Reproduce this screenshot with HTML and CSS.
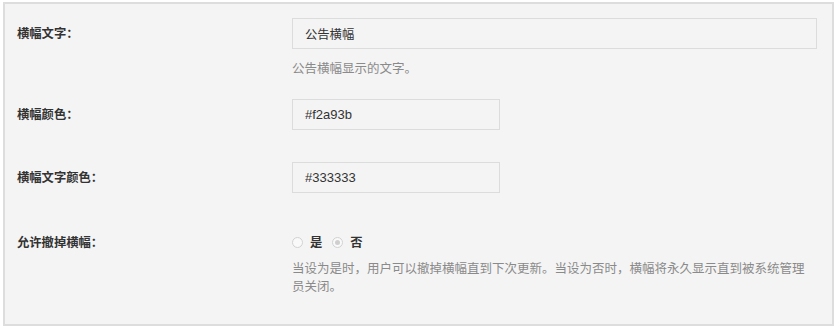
FILE: index.html
```html
<!DOCTYPE html>
<html lang="zh-CN">
<head>
<meta charset="utf-8">
<title>横幅设置</title>
<link rel="stylesheet" href="styles.css">
</head>
<body>
<div class="panel">
  <div class="row row-first">
    <div class="label">横幅文字：</div>
    <div class="field">
      <input class="input input-wide" type="text" value="公告横幅">
      <p class="desc desc-short">公告横幅显示的文字。</p>
    </div>
  </div>
  <div class="row row-second">
    <div class="label">横幅颜色：</div>
    <div class="field">
      <input class="input input-small" type="text" value="#f2a93b">
    </div>
  </div>
  <div class="row row-third">
    <div class="label">横幅文字颜色：</div>
    <div class="field">
      <input class="input input-small" type="text" value="#333333">
    </div>
  </div>
  <div class="row row-radio">
    <div class="label label-radio">允许撤掉横幅：</div>
    <div class="field">
      <div class="radios">
        <label class="opt"><span class="radio"></span><span class="opt-text">是</span></label>
        <label class="opt"><span class="radio radio-on"></span><span class="opt-text">否</span></label>
      </div>
      <p class="desc desc-long">当设为是时，用户可以撤掉横幅直到下次更新。当设为否时，横幅将永久显示直到被系统管理员关闭。</p>
    </div>
  </div>
</div>
</body>
</html>
```

FILE: styles.css
```css
html, body {
  margin: 0;
  padding: 0;
  background: #ffffff;
}

body {
  font-family: "Liberation Sans", "Noto Sans CJK SC", sans-serif;
  color: #333333;
}

.panel {
  box-sizing: border-box;
  margin: 2px 0 0 3px;
  width: 831px;
  height: 324px;
  border: 2px solid #dddddd;
  background: #f4f4f4;
  padding: 0 0 0 12px;
}

.row {
  display: grid;
  grid-template-columns: 275px 525px;
}

.row-first { padding-top: 14px; }
.row-second { padding-top: 22px; }
.row-third { padding-top: 32px; }
.row-radio { padding-top: 38px; }

.label {
  font-family: "Noto Sans CJK SC", sans-serif;
  font-size: 12.3px;
  font-weight: 700;
  color: #333333;
  line-height: 31px;
  height: 31px;
}

.label-radio {
  line-height: 22px;
  height: 22px;
}

.field {
  display: flex;
  flex-direction: column;
  align-items: flex-start;
}

.input {
  box-sizing: border-box;
  height: 31px;
  margin: 0;
  padding: 0 12px;
  border: 1px solid #dcdcdc;
  background: #f4f4f4;
  color: #333333;
  font-family: "Liberation Sans", "Noto Sans CJK SC", sans-serif;
  font-size: 13px;
  outline: none;
}

.input-wide { width: 525px; font-family: "Noto Sans CJK SC", sans-serif; font-size: 12.3px; }
.input-small { width: 208px; }

.desc {
  margin: 0;
  font-family: "Noto Sans CJK SC", sans-serif;
  font-size: 12.5px;
  line-height: 18px;
  color: #8a8a8a;
}

.desc-short { margin-top: 10px; }
.desc-long { margin-top: 6px; width: 518px; }

.radios {
  display: flex;
  align-items: center;
  height: 22px;
  gap: 10px;
}

.opt {
  display: flex;
  align-items: center;
  gap: 7px;
}

.radio {
  box-sizing: border-box;
  width: 11px;
  height: 11px;
  border-radius: 50%;
  border: 1px solid #d2d2d2;
  background: #f9f9f9;
  display: flex;
  align-items: center;
  justify-content: center;
}

.radio-on::after {
  content: "";
  width: 5px;
  height: 5px;
  border-radius: 50%;
  background: #cfcfcf;
}

.opt-text {
  font-family: "Noto Sans CJK SC", sans-serif;
  font-size: 12.3px;
  font-weight: 700;
  color: #333333;
}
```
